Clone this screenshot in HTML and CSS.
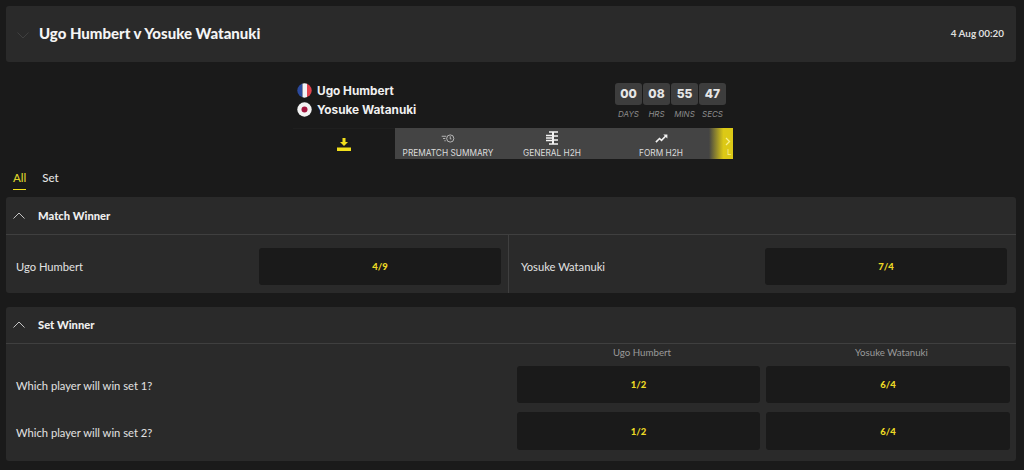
FILE: index.html
```html
<!DOCTYPE html>
<html lang="en">
  <head>
    <meta charset="UTF-8" />
    <meta name="viewport" content="width=device-width, initial-scale=1.0" />
    <title>Ugo Humbert v Yosuke Watanuki</title>
    <link rel="stylesheet" href="styles.css">
  </head>
  <body>
    <div id="container">
      <header class="event-bar">
        <svg class="chev-down" width="12" height="7" viewBox="0 0 12 7"><path d="M.5.500L6 6l5.500-5.500" fill="none" stroke="#3f3f3f" stroke-width="1"/></svg>
        <h1>Ugo Humbert v Yosuke Watanuki</h1>
        <span class="event-time">4 Aug 00:20</span>
      </header>

      <div class="scoreboard">
        <div class="score-top">
          <div class="players">
            <div class="player">
              <svg width="15" height="15" viewBox="0 0 15 15">
                <clipPath id="flag-fr"><circle cx="7.500" cy="7.500" r="7.200"/></clipPath>
                <g clip-path="url(#flag-fr)">
                  <rect width="5.500" height="15" fill="#2b4a9e"/>
                  <rect x="5.500" width="4.500" height="15" fill="#f3f3f6"/>
                  <rect x="10" width="5" height="15" fill="#e0434f"/>
                </g>
              </svg>
              <span>Ugo Humbert</span>
            </div>
            <div class="player">
              <svg width="15" height="15" viewBox="0 0 15 15">
                <circle cx="7.500" cy="7.500" r="7.200" fill="#f3f3f3"/>
                <circle cx="7.500" cy="7.500" r="3" fill="#a3173f"/>
              </svg>
              <span>Yosuke Watanuki</span>
            </div>
          </div>
          <div class="countdown">
            <div class="count-unit"><b>00</b><i>DAYS</i></div>
            <div class="count-unit"><b>08</b><i>HRS</i></div>
            <div class="count-unit"><b>55</b><i>MINS</i></div>
            <div class="count-unit"><b>47</b><i>SECS</i></div>
          </div>
        </div>
        <div class="score-tabs">
          <div class="download">
            <svg width="14" height="13" viewBox="0 0 14 13"><path d="M5.500 0h3v4h2.500L7 8 3 4h2.500zM0 9.500h14V13H0z" fill="#f2e01c"/></svg>
          </div>
          <div class="stat-tabs">
            <div class="stat-tab tab-summary">
              <svg width="14" height="9" viewBox="0 0 14 10"><g fill="none" stroke="#cfcfcf" stroke-width=".9"><circle cx="9.500" cy="5" r="4"/><path d="M9.500 2.500v3h1.300M0 2.500h5M1.500 5h2.500M3 7.500h1.500"/></g></svg>
              <span>PREMATCH SUMMARY</span>
            </div>
            <div class="stat-tab tab-general">
              <svg width="13" height="14" viewBox="0 0 13 14"><g fill="none" stroke="#f2f2f2" stroke-width="1.500"><path d="M3 1h9M0 4.500h6M0 7h6M0 9.500h6M3 13h9"/><path d="M7 1v12" stroke-width="2"/><path d="M8 5h4M8 9h4"/></g></svg>
              <span>GENERAL H2H</span>
            </div>
            <div class="stat-tab tab-form">
              <svg width="13" height="9" viewBox="0 0 14 10"><path d="M.8 9l4-4 2.200 2L12 2" fill="none" stroke="#f2f2f2" stroke-width="1.800"/><path d="M9 .5h4.500V5z" fill="#f2f2f2"/></svg>
              <span>FORM H2H</span>
            </div>
            <div class="stat-more">
              <svg width="6" height="9" viewBox="0 0 6 9"><path d="M1 1l3.500 3.500L1 8" fill="none" stroke="#f7ee8a" stroke-width="1.300"/></svg>
              <span>L</span>
            </div>
          </div>
        </div>
      </div>

      <nav class="market-tabs">
        <a class="market-tab active">All</a>
        <a class="market-tab">Set</a>
      </nav>

      <section class="market">
        <div class="market-head">
          <svg width="12" height="7" viewBox="0 0 12 7"><path d="M.5 6.500L6 1l5.500 5.500" fill="none" stroke="#c4c4c4" stroke-width="1"/></svg>
          <h3>Match Winner</h3>
        </div>
        <div class="winner-row">
          <div class="winner-cell">
            <span class="sel-name">Ugo Humbert</span>
            <button class="odds">4/9</button>
          </div>
          <div class="winner-cell">
            <span class="sel-name">Yosuke Watanuki</span>
            <button class="odds">7/4</button>
          </div>
        </div>
      </section>

      <section class="market">
        <div class="market-head short">
          <svg width="12" height="7" viewBox="0 0 12 7"><path d="M.5 6.500L6 1l5.500 5.500" fill="none" stroke="#c4c4c4" stroke-width="1"/></svg>
          <h3>Set Winner</h3>
        </div>
        <div class="set-grid">
          <span></span>
          <span class="col-name">Ugo Humbert</span>
          <span class="col-name">Yosuke Watanuki</span>

          <span class="sel-name">Which player will win set 1?</span>
          <button class="odds">1/2</button>
          <button class="odds">6/4</button>

          <span class="sel-name">Which player will win set 2?</span>
          <button class="odds">1/2</button>
          <button class="odds">6/4</button>
        </div>
      </section>
    </div>
  </body>
</html>
```

FILE: styles.css
```css
* {
  box-sizing: border-box;
  margin: 0;
  padding: 0;
}
html,
body {
  height: 470px;
  overflow: hidden;
}
body {
  background-color: #1a1a1a;
  color: #e8e8e8;
  font-family: Lato, "Liberation Sans", sans-serif;
}
#container {
  width: 1024px;
  padding: 6px 8px 0 6px;
}
.event-bar {
  height: 56px;
  background-color: #2a2a2a;
  border-radius: 3px;
  display: flex;
  align-items: center;
  padding: 0 12px 2px 11px;
}
.chev-down {
  margin-right: 10px;
  margin-top: 5px;
}
h1 {
  flex: 1;
  font-size: 15px;
  font-weight: 900;
  color: #f4f4f4;
}
.event-time {
  font-size: 9.900px;
  font-weight: 700;
  color: #dedede;
}

/* scoreboard */
.scoreboard {
  width: 440px;
  margin: 15px 0 0 287px;
}
.score-top {
  height: 51px;
  display: flex;
  justify-content: space-between;
  padding: 5px 7px 0 4px;
}
.players {
  display: flex;
  flex-direction: column;
  gap: 4px;
  padding-top: 1px;
}
.player {
  display: flex;
  align-items: center;
  gap: 5px;
  height: 15px;
  font-family: Inter, "Liberation Sans", sans-serif;
  font-size: 11.800px;
  font-weight: 700;
  color: #f0f0f0;
}
.countdown {
  display: flex;
  gap: 1px;
  margin-top: 1px;
}
.count-unit {
  width: 27px;
  display: flex;
  flex-direction: column;
  align-items: center;
  gap: 4px;
}
.count-unit b {
  width: 27px;
  height: 22px;
  background-color: #3d3d3d;
  border-radius: 3px;
  font-family: Inter, "Liberation Sans", sans-serif;
  font-size: 12px;
  font-weight: 800;
  line-height: 22px;
  text-align: center;
  color: #e6e6e6;
}
.count-unit i {
  font-family: Inter, "Liberation Sans", sans-serif;
  font-size: 8px;
  line-height: 10px;
  color: #8c8c8c;
}
.score-tabs {
  display: flex;
  height: 31px;
}
.download {
  width: 102px;
  display: flex;
  justify-content: center;
  align-items: center;
  padding-top: 1px;
  border-top: 1px solid #1f1f1f;
}
.stat-tabs {
  flex: 1;
  background-color: #444;
  display: flex;
  position: relative;
}
.stat-tab {
  display: flex;
  flex-direction: column;
  align-items: center;
  justify-content: flex-end;
  gap: 5px;
  padding-bottom: 1px;
  font-family: Inter, "Liberation Sans", sans-serif;
  font-size: 8.300px;
  line-height: 10px;
  color: #dcdcdc;
}
.tab-summary {
  width: 106px;
}
.tab-general {
  width: 102px;
  gap: 3px;
}
.tab-form {
  width: 116px;
}
.stat-more {
  position: absolute;
  top: 0;
  right: 0;
  width: 24px;
  height: 31px;
  background: linear-gradient(to right, #444, #dcc916 60%);
  display: flex;
  flex-direction: column;
  align-items: flex-end;
  gap: 2px;
  padding: 9px 2px 0 0;
  font-size: 8px;
  line-height: 8px;
  color: #f7ee8a;
}

/* tabs */
.market-tabs {
  height: 38px;
  display: flex;
  gap: 16px;
  padding: 11px 0 0 7px;
}
.market-tab {
  height: 20px;
  font-size: 11.500px;
  line-height: 16px;
  font-weight: 500;
  color: #e4e4e4;
}
.market-tab.active {
  color: #ddd02a;
  border-bottom: 1px solid #f2e01c;
}

/* markets */
.market {
  background-color: #2a2a2a;
  border-radius: 3px;
  margin-bottom: 14px;
}
.market-head {
  height: 38px;
  display: flex;
  align-items: center;
  gap: 13px;
  padding: 0 0 1px 7px;
  border-bottom: 1px solid #3f3f3f;
}
.market-head.short {
  height: 37px;
}
h3 {
  font-size: 11.200px;
  font-weight: 900;
  color: #eee;
}
.winner-row {
  display: flex;
  height: 58px;
}
.winner-cell {
  flex: 1;
  display: flex;
  align-items: center;
  justify-content: space-between;
  padding: 4px 9px 0 12px;
}
.winner-cell:first-child {
  flex: none;
  width: 503px;
  padding: 4px 7px 0 10px;
  border-right: 1px solid #3f3f3f;
}
.winner-cell .odds {
  width: 242px;
}
.sel-name {
  font-size: 11.200px;
  color: #e2e2e2;
}
.odds {
  height: 37px;
  background-color: #1a1a1a;
  border: none;
  border-radius: 3px;
  font-family: Lato, "Liberation Sans", sans-serif;
  font-size: 9.500px;
  font-weight: 900;
  color: #ecd925;
}
.set-grid {
  display: grid;
  grid-template-columns: 495px 243px 244px;
  grid-template-rows: 10px 37px 38px;
  column-gap: 6px;
  row-gap: 9px;
  align-items: center;
  padding: 3px 0 11px 10px;
}
.set-grid .sel-name {
  margin-top: 2px;
}
.col-name {
  padding-left: 7px;
  font-size: 9.700px;
  text-align: center;
  color: #9a9a9a;
}
.set-grid .odds {
  height: 100%;
}
```
